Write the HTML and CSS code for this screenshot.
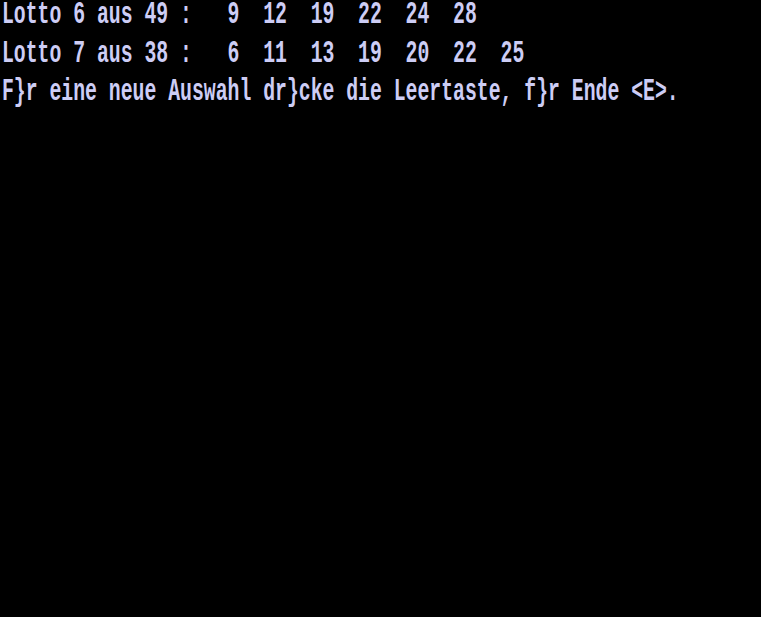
FILE: index.html
```html
<!DOCTYPE html>
<html>
<head>
<meta charset="utf-8">
<link rel="stylesheet" href="styles.css">
</head>
<body>
<div class="screen">
<div class="line"><span class="txt">Lotto 6 aus 49 :   9  12  19  22  24  28</span></div>
<div class="line"><span class="txt">Lotto 7 aus 38 :   6  11  13  19  20  22  25</span></div>
<div class="line"><span class="txt">F}r eine neue Auswahl dr}cke die Leertaste, f}r Ende &lt;E&gt;.</span></div>
</div>
</body>
</html>
```
FILE: styles.css
```css
html, body {
  margin: 0;
  padding: 0;
  background: #000;
}
.screen {
  width: 761px;
  height: 617px;
  background: #000;
  overflow: hidden;
  padding-left: 2px;
  box-sizing: border-box;
}
.line {
  height: 38.7px;
}
.txt {
  display: block;
  white-space: pre;
  font-family: "Liberation Mono", monospace;
  font-size: 19.8px;
  line-height: 24px;
  font-weight: bold;
  color: #cdcdf5;
  transform-origin: 0 0;
  transform: translateY(-4px) scaleY(1.6);
}
```
